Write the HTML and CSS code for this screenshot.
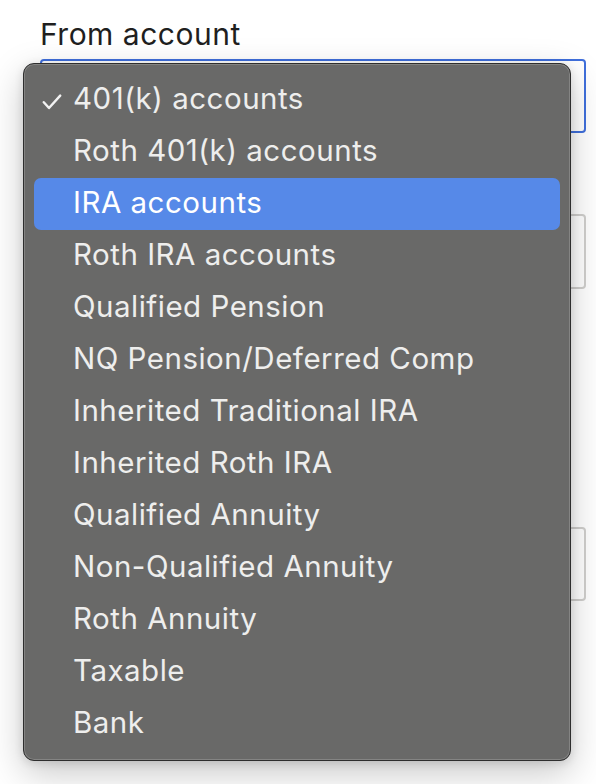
FILE: index.html
```html
<!DOCTYPE html>
<html lang="en">
<head>
<meta charset="utf-8">
<title>From account</title>
<link rel="stylesheet" href="styles.css">
</head>
<body>
<div class="form">
  <label class="label">From account</label>
  <div class="field field-focus"></div>
  <div class="field field-second"></div>
  <div class="field field-third"></div>

  <ul class="menu">
    <li class="item checked">
      <svg class="check" width="20" height="16" viewBox="0 0 20 16"><polyline points="1.8,8.2 7,14 18.2,1.6" fill="none" stroke="#f2f2f2" stroke-width="2.4" stroke-linecap="round" stroke-linejoin="round"/></svg>
      401(k) accounts</li>
    <li class="item">Roth 401(k) accounts</li>
    <li class="item active">IRA accounts</li>
    <li class="item">Roth IRA accounts</li>
    <li class="item">Qualified Pension</li>
    <li class="item">NQ Pension/Deferred Comp</li>
    <li class="item">Inherited Traditional IRA</li>
    <li class="item">Inherited Roth IRA</li>
    <li class="item">Qualified Annuity</li>
    <li class="item">Non-Qualified Annuity</li>
    <li class="item">Roth Annuity</li>
    <li class="item">Taxable</li>
    <li class="item">Bank</li>
  </ul>
</div>
</body>
</html>
```

FILE: styles.css
```css
html, body {
  margin: 0;
  padding: 0;
  background: #ffffff;
}

body {
  width: 596px;
  height: 784px;
  overflow: hidden;
  font-family: Inter, "Liberation Sans", sans-serif;
}

.form {
  position: relative;
  padding: 16px 10px 0 40px;
}

.label {
  display: block;
  font-size: 30px;
  letter-spacing: 0.5px;
  line-height: 36px;
  color: #1f1f1f;
  margin-bottom: 7px;
}

.field {
  box-sizing: border-box;
  width: 546px;
  height: 74px;
  border: 2px solid #d0cfcd;
  border-radius: 4px;
}

.field-focus {
  border-color: #3f6fdc;
}

.field-second {
  margin-top: 81px;
  height: 75px;
}

.field-third {
  margin-top: 238px;
  height: 74px;
}

.menu {
  position: absolute;
  left: 23px;
  top: 63px;
  box-sizing: border-box;
  width: 548px;
  height: 698px;
  margin: 0;
  padding: 10px;
  list-style: none;
  background: #696968;
  border: 1px solid #2e2e2e;
  border-radius: 11px;
  box-shadow: inset 0 0 0 1px rgba(255, 255, 255, 0.18),
              0 12px 36px rgba(0, 0, 0, 0.22),
              0 2px 10px rgba(0, 0, 0, 0.12);
  font-family: Inter, "Liberation Sans", sans-serif;
}

.item {
  position: relative;
  box-sizing: border-box;
  height: 52px;
  padding-bottom: 3px;
  line-height: 49px;
  padding-left: 39px;
  font-size: 29.5px;
  letter-spacing: 0.5px;
  color: #eeeeed;
  border-radius: 7px;
  white-space: nowrap;
}

.item.active {
  background: #5689e8;
  color: #ffffff;
}

.check {
  position: absolute;
  left: 8px;
  top: 20px;
}
```
